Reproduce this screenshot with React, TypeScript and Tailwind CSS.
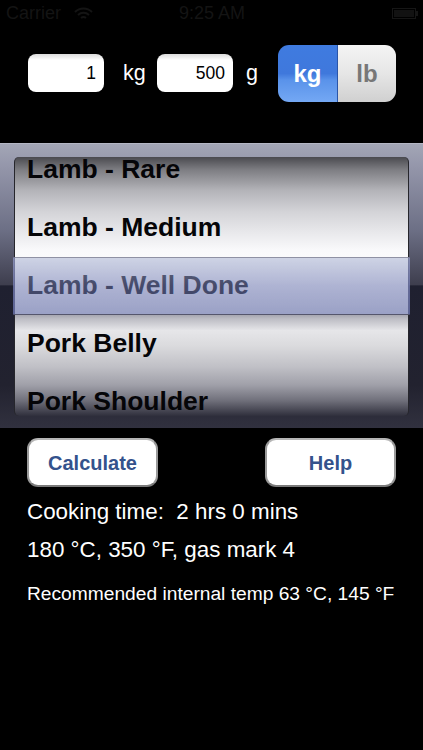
const rows = ['Lamb - Rare', 'Lamb - Medium', 'Lamb - Well Done', 'Pork Belly', 'Pork Shoulder'];

function StatusBar() {
  return (
    <div className="h-[27px] flex items-center justify-between pl-[6px] pr-[5px] text-[#141414] text-[18px]">
      <div className="flex items-center gap-[13px] w-[130px]">
        <span>Carrier</span>
        <svg width="19" height="14" viewBox="0 0 19 14" fill="none" stroke="#141414" strokeWidth="2">
          <path d="M1 5a12 12 0 0 1 17 0" />
          <path d="M4 8a8 8 0 0 1 11 0" />
          <path d="M7 11a4 4 0 0 1 5 0" />
        </svg>
      </div>
      <span>9:25 AM</span>
      <div className="w-[130px] flex justify-end items-center">
        <div className="w-[24px] h-[11px] border border-[#161616] p-[1px]">
          <div className="w-full h-full bg-[#121212]" />
        </div>
        <div className="w-[2px] h-[5px] bg-[#161616]" />
      </div>
    </div>
  );
}

function Field({ value }: { value: string }) {
  return (
    <div className="w-[76px] h-[38px] bg-[linear-gradient(#dcdcdc,#ffffff_16%)] rounded-[8px] flex items-center justify-end pr-[8px] text-black text-[17.5px]">
      {value}
    </div>
  );
}

function Wheel() {
  return (
    <div className="relative h-[285px] bg-[linear-gradient(#a3a6b6_0%,#9496aa_8%,#6d7086_30%,#3e3e4e_49.5%,#1f2030_50%,#22222f_85%,#31313f_100%)] pt-[13px] border-t border-[#b4b6c4]">
      <div className="mx-[14px] h-[259px] rounded-[5px] border-x border-[#26262c] overflow-hidden bg-[linear-gradient(#4a4a4f_0%,#7e7e83_5%,#b4b4b9_13%,#d3d3d7_21%,#e8e8eb_29%,#f9f9fb_36%,#ffffff_50%,#e8e8ea_60.9%,#a9a9b2_61.2%,#bdbdc4_62.5%,#e6e6e9_67%,#dadadd_73%,#c0c0c6_81%,#a0a0a9_88%,#70707b_94%,#2f2f3c_100%)] flex flex-col justify-center">
        {rows.map(row => (
          <div key={row} className="h-[58px] shrink-0 flex items-center pl-[12px] pb-[2px] text-[#050508] text-[26.5px] font-bold">
            {row}
          </div>
        ))}
      </div>
      {/* selection bar sits over the wheel, the row shows through it */}
      <div className="absolute left-[13px] right-[13px] top-[113px] h-[58px] border-y border-t-[#8f91a4] border-b-[#55566c] border-x-2 border-x-[#7f88c2]/40 bg-[linear-gradient(rgba(174,183,212,0.58),rgba(115,124,178,0.58)_50%,rgba(98,109,171,0.58))]" />
    </div>
  );
}

export default function App() {
  return (
    <div className="w-[423px] h-[750px] bg-black text-white overflow-hidden font-['Liberation_Sans',Arial,sans-serif]">
      <StatusBar />
      <div className="h-[116px] pt-[18px] pl-[28px] flex items-start">
        <div className="mt-[9px] flex items-center">
          <Field value="1" />
          <span className="ml-[19px] w-[34px] text-[21.5px]">kg</span>
          <Field value="500" />
          <span className="ml-[13px] w-[32px] text-[21.5px]">g</span>
        </div>
        <div className="w-[118px] h-[57px] rounded-[11px] overflow-hidden flex text-[24px] font-bold">
          <div className="w-[60px] flex items-center justify-center bg-[linear-gradient(#3f7be0,#3f78dc_50%,#5a93ea_62%,#74a8f4)] border-r border-[#2a55a8]">kg</div>
          <div className="flex-1 flex items-center justify-center text-[#777777] bg-[linear-gradient(#f4f4f4,#e6e6e6_50%,#d0d0d0)]">lb</div>
        </div>
      </div>
      <Wheel />
      <div className="flex justify-between px-[27px] mt-[10px]">
        <button className="w-[131px] h-[49px] rounded-[11px] bg-white border-2 border-t-[#b5b5b5] border-x-[#9a9a9a] border-b-[#7a7a7a] text-[#34528c] text-[20px] font-bold">Calculate</button>
        <button className="w-[131px] h-[49px] rounded-[11px] bg-white border-2 border-t-[#b5b5b5] border-x-[#9a9a9a] border-b-[#7a7a7a] text-[#34528c] text-[20px] font-bold">Help</button>
      </div>
      <div className="px-[27px] pt-[9px]">
        <div className="h-[32px] flex items-center text-[22.4px] whitespace-pre">Cooking time:  2 hrs 0 mins</div>
        <div className="h-[32px] mt-[6px] flex items-center text-[22.4px]">180 °C, 350 °F, gas mark 4</div>
        <div className="h-[26px] mt-[15px] flex items-center text-[19.2px] whitespace-nowrap">Recommended internal temp 63 °C, 145 °F</div>
      </div>
    </div>
  );
}
